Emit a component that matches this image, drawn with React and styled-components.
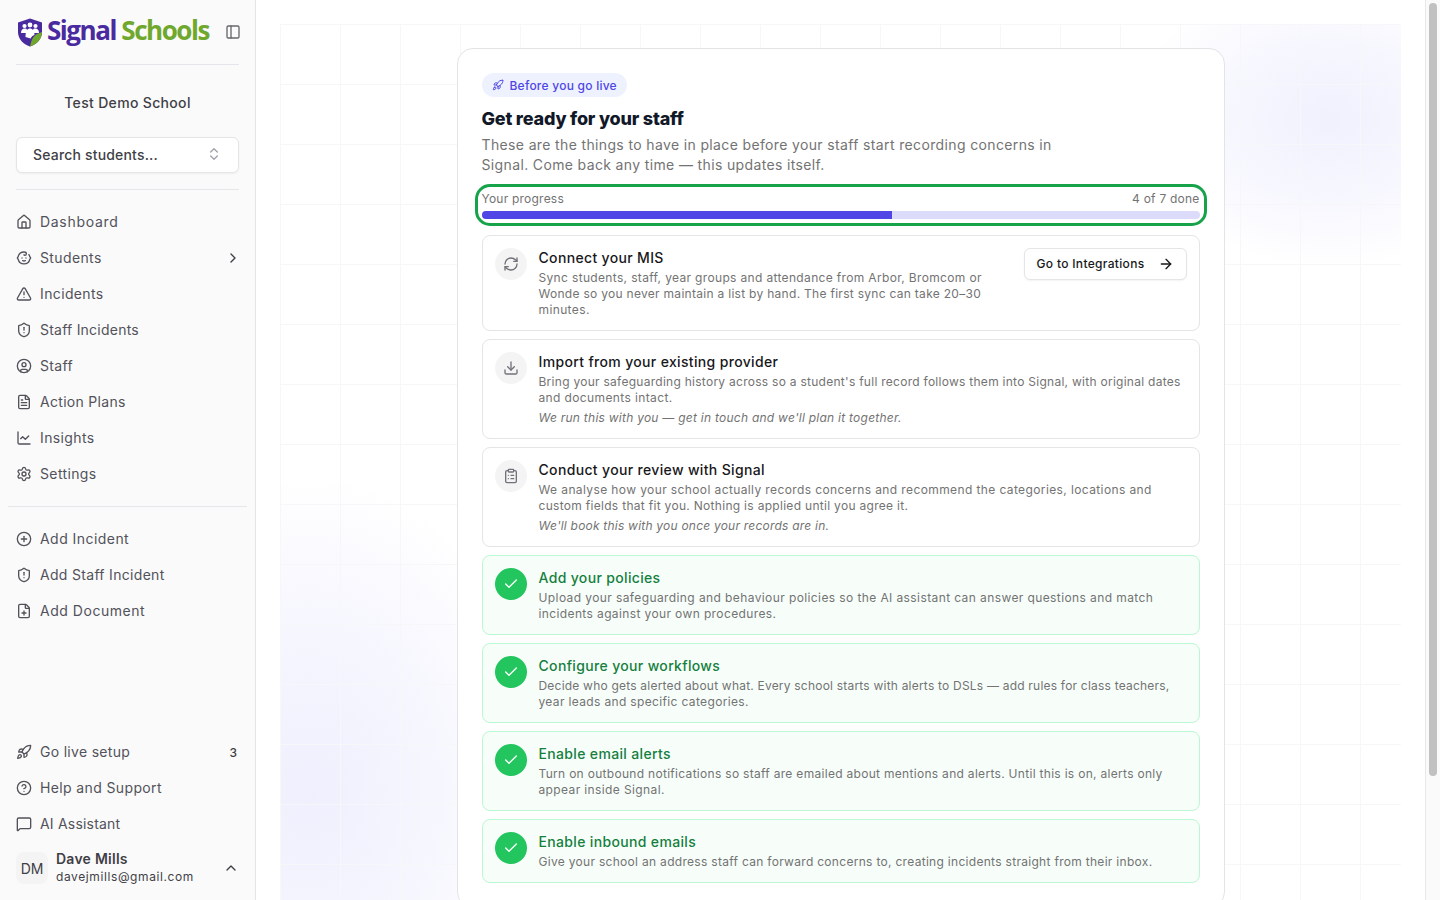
import React from "react";
import styled, { createGlobalStyle } from "styled-components";
import {
  Home, Baby, TriangleAlert, ShieldAlert, CircleUser, FileText, ChartLine, Settings,
  CirclePlus, FilePlus, Rocket, CircleHelp, MessageSquare, ChevronRight, ChevronUp,
  ChevronsUpDown, PanelLeft, RefreshCw, Download, ClipboardList, Check, ArrowRight,
} from "lucide-react";

const FONT = `"Inter", "Liberation Sans", sans-serif`;

const Global = createGlobalStyle`
  * { box-sizing: border-box; }
  html, body { margin: 0; padding: 0; height: 100%; overflow: hidden; }
  body { font-family: ${FONT}; background: #fff; color: #18181b; }
`;

const Shell = styled.div`
  display: flex;
  height: 100vh;
`;

const Sidebar = styled.aside`
  width: 256px;
  flex-shrink: 0;
  display: flex;
  flex-direction: column;
  background: #fafafa;
  border-right: 1px solid #e5e5e5;
  padding-bottom: 14px;
`;

const Brand = styled.div`
  height: 64px;
  padding: 0 14px 0 17px;
  display: flex;
  align-items: center;
  justify-content: space-between;
`;

const BrandMark = styled.div`
  display: flex;
  align-items: center;
  gap: 4px;
`;

const WordmarkBox = styled.div`
  padding-bottom: 4px;
`;

const Wordmark = styled.span`
  font-family: "Open Sans", sans-serif;
  font-size: 26px;
  font-weight: 700;
  letter-spacing: -1.45px;
  line-height: 30px;
  color: ${(p) => p.$color};
`;

const CollapseButton = styled.span`
  display: flex;
  color: #66666e;
`;

const Rule = styled.hr`
  margin: 0 ${(p) => p.$inset}px;
  border: 0;
  border-top: 1px solid #e6e6ea;
`;

const SchoolName = styled.div`
  padding: 28px 0 24px;
  text-align: center;
  font-size: 14px;
  line-height: 20px;
  font-weight: 500;
  letter-spacing: 0.33px;
  color: #3f3f46;
`;

const SearchButton = styled.div`
  height: 36px;
  margin: 0 16px 16px;
  padding: 0 16px 2px 16px;
  display: flex;
  align-items: center;
  justify-content: space-between;
  background: #fff;
  border: 1px solid #e5e5e5;
  border-radius: 6px;
  box-shadow: 0 1px 2px rgba(0, 0, 0, 0.05);
  font-size: 14px;
  font-weight: 500;
  letter-spacing: 0.18px;
  color: #3f3f46;
  svg { color: #a1a1aa; }
`;

const Nav = styled.nav`
  display: flex;
  flex-direction: column;
  padding: 14px 16px;
  ${(p) => p.$bottom && `margin-top: auto; padding-top: 0; padding-bottom: 8px;`}
`;

const NavRow = styled.div`
  height: 36px;
  display: flex;
  align-items: center;
  gap: 8px;
  font-size: 14px;
  color: #52525b;
  svg { flex-shrink: 0; }
`;

const NavLabel = styled.span`
  flex: 1;
  padding-bottom: 2px;
  letter-spacing: ${(p) => p.$track}px;
`;

const NavTrail = styled.span`
  display: flex;
  font-size: 12px;
  font-weight: 500;
  color: #3f3f46;
  margin-right: ${(p) => (p.$text ? "0" : "-2px")};
  padding-right: ${(p) => (p.$text ? "2px" : "0")};
`;

const UserRow = styled.div`
  display: flex;
  align-items: center;
  gap: 8px;
  padding: 0 16px;
`;

const Avatar = styled.div`
  width: 32px;
  height: 32px;
  border-radius: 8px;
  background: #f4f4f5;
  display: flex;
  align-items: center;
  justify-content: center;
  font-size: 14px;
  color: #3f3f46;
`;

const UserText = styled.div`
  flex: 1;
  display: flex;
  flex-direction: column;
`;

const UserName = styled.span`
  font-size: 14px;
  line-height: 18px;
  font-weight: 600;
  letter-spacing: 0.25px;
  color: #3f3f46;
`;

const UserEmail = styled.span`
  font-size: 12px;
  line-height: 18px;
  letter-spacing: 0.6px;
  color: #3f3f46;
`;

const UserChevron = styled.span`
  display: flex;
  color: #3f3f46;
`;

const Main = styled.main`
  flex: 1;
  min-width: 0;
  overflow: hidden;
  padding: 24px;
  background: #fff;
`;

const ScrollRail = styled.div`
  width: 15px;
  flex-shrink: 0;
  padding: 3px 3px 0 3px;
  background: #fafafa;
  border-left: 1px solid #e8e8e8;
`;

const ScrollThumb = styled.div`
  height: 773px;
  border-radius: 4px;
  background: #c1c1c1;
`;

const Backdrop = styled.div`
  min-height: 992px;
  padding-top: 24px;
  background-color: #fff;
  background-image:
    linear-gradient(#f7f7f9 1px, transparent 1px),
    linear-gradient(90deg, #f7f7f9 1px, transparent 1px),
    radial-gradient(ellipse 200px 150px at 1050px 95px, rgba(99, 102, 241, 0.095), rgba(99, 102, 241, 0.05) 55%, transparent 100%),
    radial-gradient(ellipse 240px 320px at 30px 770px, rgba(99, 102, 241, 0.1), rgba(99, 102, 241, 0.055) 55%, transparent 100%);
  background-size: 60px 60px, 60px 60px, 100% 100%, 100% 100%;
`;

const Card = styled.section`
  width: 768px;
  margin: 0 auto;
  padding: 24px;
  background: #fff;
  border: 1px solid #e4e4e7;
  border-radius: 16px;
`;

const Pill = styled.div`
  display: inline-flex;
  align-items: center;
  gap: 6px;
  height: 24px;
  padding: 0 10px;
  border-radius: 999px;
  background: #eef2ff;
  color: #4f46e5;
  font-size: 12px;
  font-weight: 500;
  letter-spacing: 0.24px;
  vertical-align: top;
`;

const Heading = styled.h1`
  margin: 8px 0 2px;
  font-size: 18px;
  line-height: 28px;
  font-weight: 800;
  letter-spacing: -0.2px;
  color: #111827;
`;

const Lede = styled.p`
  margin: 0 0 16px;
  font-size: 14px;
  line-height: 20px;
  color: #737373;
`;

const Line = styled.span`
  display: block;
  white-space: nowrap;
  letter-spacing: ${(p) => p.$track}px;
`;

const Progress = styled.div`
  border-radius: 8px;
  outline: 3px solid #16a34a;
  outline-offset: 4px;
  margin-bottom: 16px;
`;

const ProgressHead = styled.div`
  display: flex;
  justify-content: space-between;
  font-size: 12px;
  line-height: 16px;
  letter-spacing: 0.22px;
  color: #737373;
  margin-bottom: 4px;
`;

const Track = styled.div`
  height: 8px;
  border-radius: 999px;
  overflow: hidden;
  background: #dcdbfa;
`;

const Fill = styled.div`
  height: 100%;
  background: #4f46e5;
`;

const Steps = styled.div`
  display: flex;
  flex-direction: column;
  gap: 8px;
`;

const Step = styled.article`
  display: flex;
  gap: 12px;
  padding: 12px;
  border-radius: 8px;
  border: 1px solid ${(p) => (p.$done ? "#bbf7d0" : "#e5e5e5")};
  background: ${(p) => (p.$done ? "#f7fefa" : "#fff")};
`;

const StepIcon = styled.div`
  width: 32px;
  height: 32px;
  flex-shrink: 0;
  border-radius: 50%;
  display: flex;
  align-items: center;
  justify-content: center;
  background: ${(p) => (p.$done ? "#22c55e" : "#f4f4f5")};
  color: ${(p) => (p.$done ? "#fff" : "#71717a")};
`;

const StepBody = styled.div`
  flex: 1;
  min-width: 0;
`;

const StepTitle = styled.div`
  font-size: 14px;
  line-height: 20px;
  font-weight: 500;
  letter-spacing: 0.34px;
  color: ${(p) => (p.$done ? "#15803d" : "#18181b")};
  margin-bottom: 2px;
`;

const StepText = styled.div`
  font-size: 12px;
  line-height: 16px;
  color: #737373;
`;

const StepNote = styled(StepText)`
  margin-top: 4px;
  font-style: italic;
`;

const ActionButton = styled.div`
  height: 32px;
  flex-shrink: 0;
  padding: 0 12px 1px;
  display: flex;
  align-items: center;
  gap: 13px;
  background: #fff;
  border: 1px solid #e5e5e5;
  border-radius: 6px;
  box-shadow: 0 1px 2px rgba(0, 0, 0, 0.05);
  font-size: 12px;
  font-weight: 500;
  letter-spacing: 0.32px;
  color: #18181b;
`;

const Shield = () => (
  <svg width="26" height="29" viewBox="0 0 26 29" aria-hidden="true">
    <path d="M13 .5 25 4.500V14c0 7-5 12-12 14.500C6 26 1 21 1 14V4.500Z" fill="#4a2a9f" />
    <path d="M13 28.500c7-2.500 12-7.500 12-14.500-1 .5-4 1-6.500 3-3 2.300-4.500 6-5.500 11.500Z" fill="#6fa82d" />
    <circle cx="7.500" cy="8" r="2.100" fill="#fff" />
    <circle cx="18.500" cy="8" r="2.100" fill="#fff" />
    <circle cx="13" cy="7" r="2.400" fill="#fff" />
    <path d="M4 15c0-3 1.500-4.500 3.500-4.500S10 11 10 12.500V15Z" fill="#fff" />
    <path d="M22 15c0-3-1.500-4.500-3.500-4.500S16 11 16 12.500V15Z" fill="#fff" />
    <path d="M8.500 19c0-6 2-8.500 4.500-8.500s4.500 2.500 4.500 6.500c-2 .8-3 1.500-3.800 3.500Z" fill="#fff" />
  </svg>
);

const mainNav = [
  [Home, "Dashboard", null, 0.7],
  [Baby, "Students", <ChevronRight size={16} key="c" />, 0.37],
  [TriangleAlert, "Incidents", null, 0.37],
  [ShieldAlert, "Staff Incidents", null, 0.23],
  [CircleUser, "Staff", null, 0.37],
  [FileText, "Action Plans", null, 0.3],
  [ChartLine, "Insights", null, 0.37],
  [Settings, "Settings", null, 0.37],
];
const addNav = [
  [CirclePlus, "Add Incident", null, 0.45],
  [ShieldAlert, "Add Staff Incident", null, 0.31],
  [FilePlus, "Add Document", null, 0.53],
];
const bottomNav = [
  [Rocket, "Go live setup", "3", 0.3],
  [CircleHelp, "Help and Support", null, 0.37],
  [MessageSquare, "AI Assistant", null, 0.2],
];

const steps = [
  {
    icon: RefreshCw,
    title: "Connect your MIS",
    lines: [
      ["Sync students, staff, year groups and attendance from Arbor, Bromcom or", 0.34],
      ["Wonde so you never maintain a list by hand. The first sync can take 20–30", 0.29],
      ["minutes.", 0.38],
    ],
    action: "Go to Integrations",
  },
  {
    icon: Download,
    title: "Import from your existing provider",
    lines: [
      ["Bring your safeguarding history across so a student's full record follows them into Signal, with original dates", 0.27],
      ["and documents intact.", 0.38],
    ],
    note: ["We run this with you — get in touch and we'll plan it together.", 0.25],
  },
  {
    icon: ClipboardList,
    title: "Conduct your review with Signal",
    lines: [
      ["We analyse how your school actually records concerns and recommend the categories, locations and", 0.39],
      ["custom fields that fit you. Nothing is applied until you agree it.", 0.3],
    ],
    note: ["We'll book this with you once your records are in.", 0.22],
  },
  {
    done: true,
    title: "Add your policies",
    lines: [
      ["Upload your safeguarding and behaviour policies so the AI assistant can answer questions and match", 0.4],
      ["incidents against your own procedures.", 0.38],
    ],
  },
  {
    done: true,
    title: "Configure your workflows",
    lines: [
      ["Decide who gets alerted about what. Every school starts with alerts to DSLs — add rules for class teachers,", 0.21],
      ["year leads and specific categories.", 0.35],
    ],
  },
  {
    done: true,
    title: "Enable email alerts",
    lines: [
      ["Turn on outbound notifications so staff are emailed about mentions and alerts. Until this is on, alerts only", 0.3],
      ["appear inside Signal.", 0.38],
    ],
  },
  {
    done: true,
    title: "Enable inbound emails",
    lines: [["Give your school an address staff can forward concerns to, creating incidents straight from their inbox.", 0.3]],
  },
];

const NavItems = ({ items }) =>
  items.map(([Icon, label, trail, track]) => (
    <NavRow key={label}>
      <Icon size={16} strokeWidth={2} />
      <NavLabel $track={track}>{label}</NavLabel>
      {trail && <NavTrail $text={typeof trail === "string"}>{trail}</NavTrail>}
    </NavRow>
  ));

export default function App() {
  const done = steps.filter((s) => s.done).length;
  return (
    <Shell>
      <Global />
      <Sidebar>
        <Brand>
          <BrandMark>
            <Shield />
            <WordmarkBox>
              <Wordmark $color="#4a2a9f">Signal </Wordmark>
              <Wordmark $color="#6fa82d">Schools</Wordmark>
            </WordmarkBox>
          </BrandMark>
          <CollapseButton><PanelLeft size={16} /></CollapseButton>
        </Brand>
        <Rule $inset={16} />
        <SchoolName>Test Demo School</SchoolName>
        <SearchButton>
          Search students...
          <ChevronsUpDown size={16} />
        </SearchButton>
        <Rule $inset={16} />
        <Nav><NavItems items={mainNav} /></Nav>
        <Rule $inset={8} />
        <Nav><NavItems items={addNav} /></Nav>
        <Nav $bottom><NavItems items={bottomNav} /></Nav>
        <UserRow>
          <Avatar>DM</Avatar>
          <UserText>
            <UserName>Dave Mills</UserName>
            <UserEmail>davejmills@gmail.com</UserEmail>
          </UserText>
          <UserChevron><ChevronUp size={16} /></UserChevron>
        </UserRow>
      </Sidebar>
      <Main>
        <Backdrop>
          <Card>
            <Pill><Rocket size={12} />Before you go live</Pill>
            <Heading>Get ready for your staff</Heading>
            <Lede>
              <Line $track={0.36}>These are the things to have in place before your staff start recording concerns in</Line>
              <Line $track={0.36}>Signal. Come back any time — this updates itself.</Line>
            </Lede>
            <Progress>
              <ProgressHead>
                <span>Your progress</span>
                <span>{done} of {steps.length} done</span>
              </ProgressHead>
              <Track><Fill style={{ width: `${(done / steps.length) * 100}%` }} /></Track>
            </Progress>
            <Steps>
              {steps.map((s) => {
                const Icon = s.done ? Check : s.icon;
                return (
                  <Step key={s.title} $done={s.done}>
                    <StepIcon $done={s.done}><Icon size={16} /></StepIcon>
                    <StepBody>
                      <StepTitle $done={s.done}>{s.title}</StepTitle>
                      <StepText>
                        {s.lines.map(([text, track]) => (
                          <Line key={text} $track={track}>{text}</Line>
                        ))}
                      </StepText>
                      {s.note && <StepNote><Line $track={s.note[1]}>{s.note[0]}</Line></StepNote>}
                    </StepBody>
                    {s.action && (
                      <ActionButton>{s.action}<ArrowRight size={16} /></ActionButton>
                    )}
                  </Step>
                );
              })}
            </Steps>
          </Card>
        </Backdrop>
      </Main>
      <ScrollRail><ScrollThumb /></ScrollRail>
    </Shell>
  );
}
